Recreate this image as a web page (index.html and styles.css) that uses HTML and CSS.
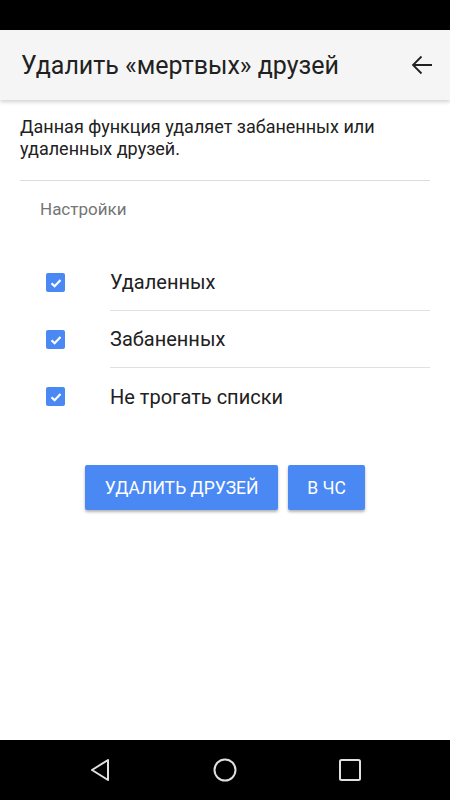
FILE: index.html
```html
<!DOCTYPE html>
<html lang="ru">
<head>
    <meta charset="UTF-8">
    <meta name="viewport" content="width=device-width, initial-scale=1.0">
    <title>Удалить «мертвых» друзей</title>
    <link rel="stylesheet" href="styles.css">
</head>
<body>
    <div class="phone">
        <div class="status-bar"></div>

        <div class="toolbar">
            <h1 class="toolbar-title">Удалить «мертвых» друзей</h1>
            <svg class="back-icon" width="22" height="20" viewBox="0 0 22 20">
                <path d="M21 10 H2 M10.5 1.5 L2 10 L10.5 18.5" fill="none" stroke="#212121" stroke-width="1.8"/>
            </svg>
        </div>

        <div class="content">
            <p class="description">Данная функция удаляет забаненных или удаленных друзей.</p>
            <div class="divider"></div>
            <div class="section-title">Настройки</div>

            <div class="options">
                <label class="option">
                    <span class="checkbox"><svg width="14" height="14" viewBox="0 0 14 14"><path d="M2.5 7.2 L5.6 10.2 L11.5 4" fill="none" stroke="#fff" stroke-width="2.2"/></svg></span>
                    <span class="option-text">Удаленных</span>
                </label>
                <label class="option">
                    <span class="checkbox"><svg width="14" height="14" viewBox="0 0 14 14"><path d="M2.5 7.2 L5.6 10.2 L11.5 4" fill="none" stroke="#fff" stroke-width="2.2"/></svg></span>
                    <span class="option-text">Забаненных</span>
                </label>
                <label class="option">
                    <span class="checkbox"><svg width="14" height="14" viewBox="0 0 14 14"><path d="M2.5 7.2 L5.6 10.2 L11.5 4" fill="none" stroke="#fff" stroke-width="2.2"/></svg></span>
                    <span class="option-text">Не трогать списки</span>
                </label>
            </div>

            <div class="actions">
                <button class="btn btn-wide">Удалить друзей</button>
                <button class="btn">В ЧС</button>
            </div>
        </div>

        <div class="nav-bar">
            <svg width="24" height="26" viewBox="0 0 24 26"><path d="M20 3 L4 13 L20 23 Z" fill="none" stroke="#e0e0e0" stroke-width="2" stroke-linejoin="round"/></svg>
            <svg width="26" height="26" viewBox="0 0 26 26"><circle cx="13" cy="13" r="10.5" fill="none" stroke="#e0e0e0" stroke-width="2"/></svg>
            <svg width="24" height="24" viewBox="0 0 24 24"><rect x="2" y="2" width="20" height="20" rx="1.5" fill="none" stroke="#e0e0e0" stroke-width="2"/></svg>
        </div>
    </div>
</body>
</html>
```

FILE: styles.css
```css
body { margin: 0; font-family: Roboto, "Noto Sans", sans-serif; background: #fff; color: #212121; }
.phone { width: 450px; height: 800px; display: flex; flex-direction: column; overflow: hidden; }
.status-bar { height: 30px; background: #000; }
.toolbar { height: 70px; background: #f5f5f5; display: flex; align-items: center; justify-content: space-between; padding: 0 17px 0 21px; box-shadow: 0 2px 4px rgba(0, 0, 0, 0.18); position: relative; z-index: 1; }
.toolbar-title { margin: 0; font-size: 25px; font-weight: 400; color: #212121; }
.back-icon { display: block; }
.content { flex: 1; padding: 0 20px; }
.description { margin: 16px 0 0; font-size: 18px; line-height: 22px; }
.divider { height: 1px; background: #dcdcdc; margin-top: 20px; }
.section-title { font-size: 17px; color: #757575; padding: 18px 0 0 20px; line-height: 20px; }
.options { margin-top: 35px; }
.option { display: flex; align-items: center; height: 57px; }
.option-text { flex: 1; height: 100%; display: flex; align-items: center; font-size: 20px; margin-left: 45px; border-bottom: 1px solid #e0e0e0; box-sizing: border-box; }
.option:last-child .option-text { border-bottom: none; }
.checkbox { width: 19px; height: 19px; margin-left: 26px; background: #4a89f3; border-radius: 2px; display: flex; align-items: center; justify-content: center; }
.actions { display: flex; justify-content: center; gap: 10px; margin-top: 40px; }
.btn { height: 45px; padding: 0 19px; background: #4a89f3; color: #fff; border: none; border-radius: 2px; font-family: inherit; font-size: 17.5px; white-space: nowrap; text-transform: uppercase; box-shadow: 0 2px 3px rgba(0, 0, 0, 0.3); }
.btn-wide { width: 193px; padding: 0; }
.nav-bar { height: 60px; background: #000; display: flex; align-items: center; justify-content: space-between; padding: 0 88px 0 88px; }
```
